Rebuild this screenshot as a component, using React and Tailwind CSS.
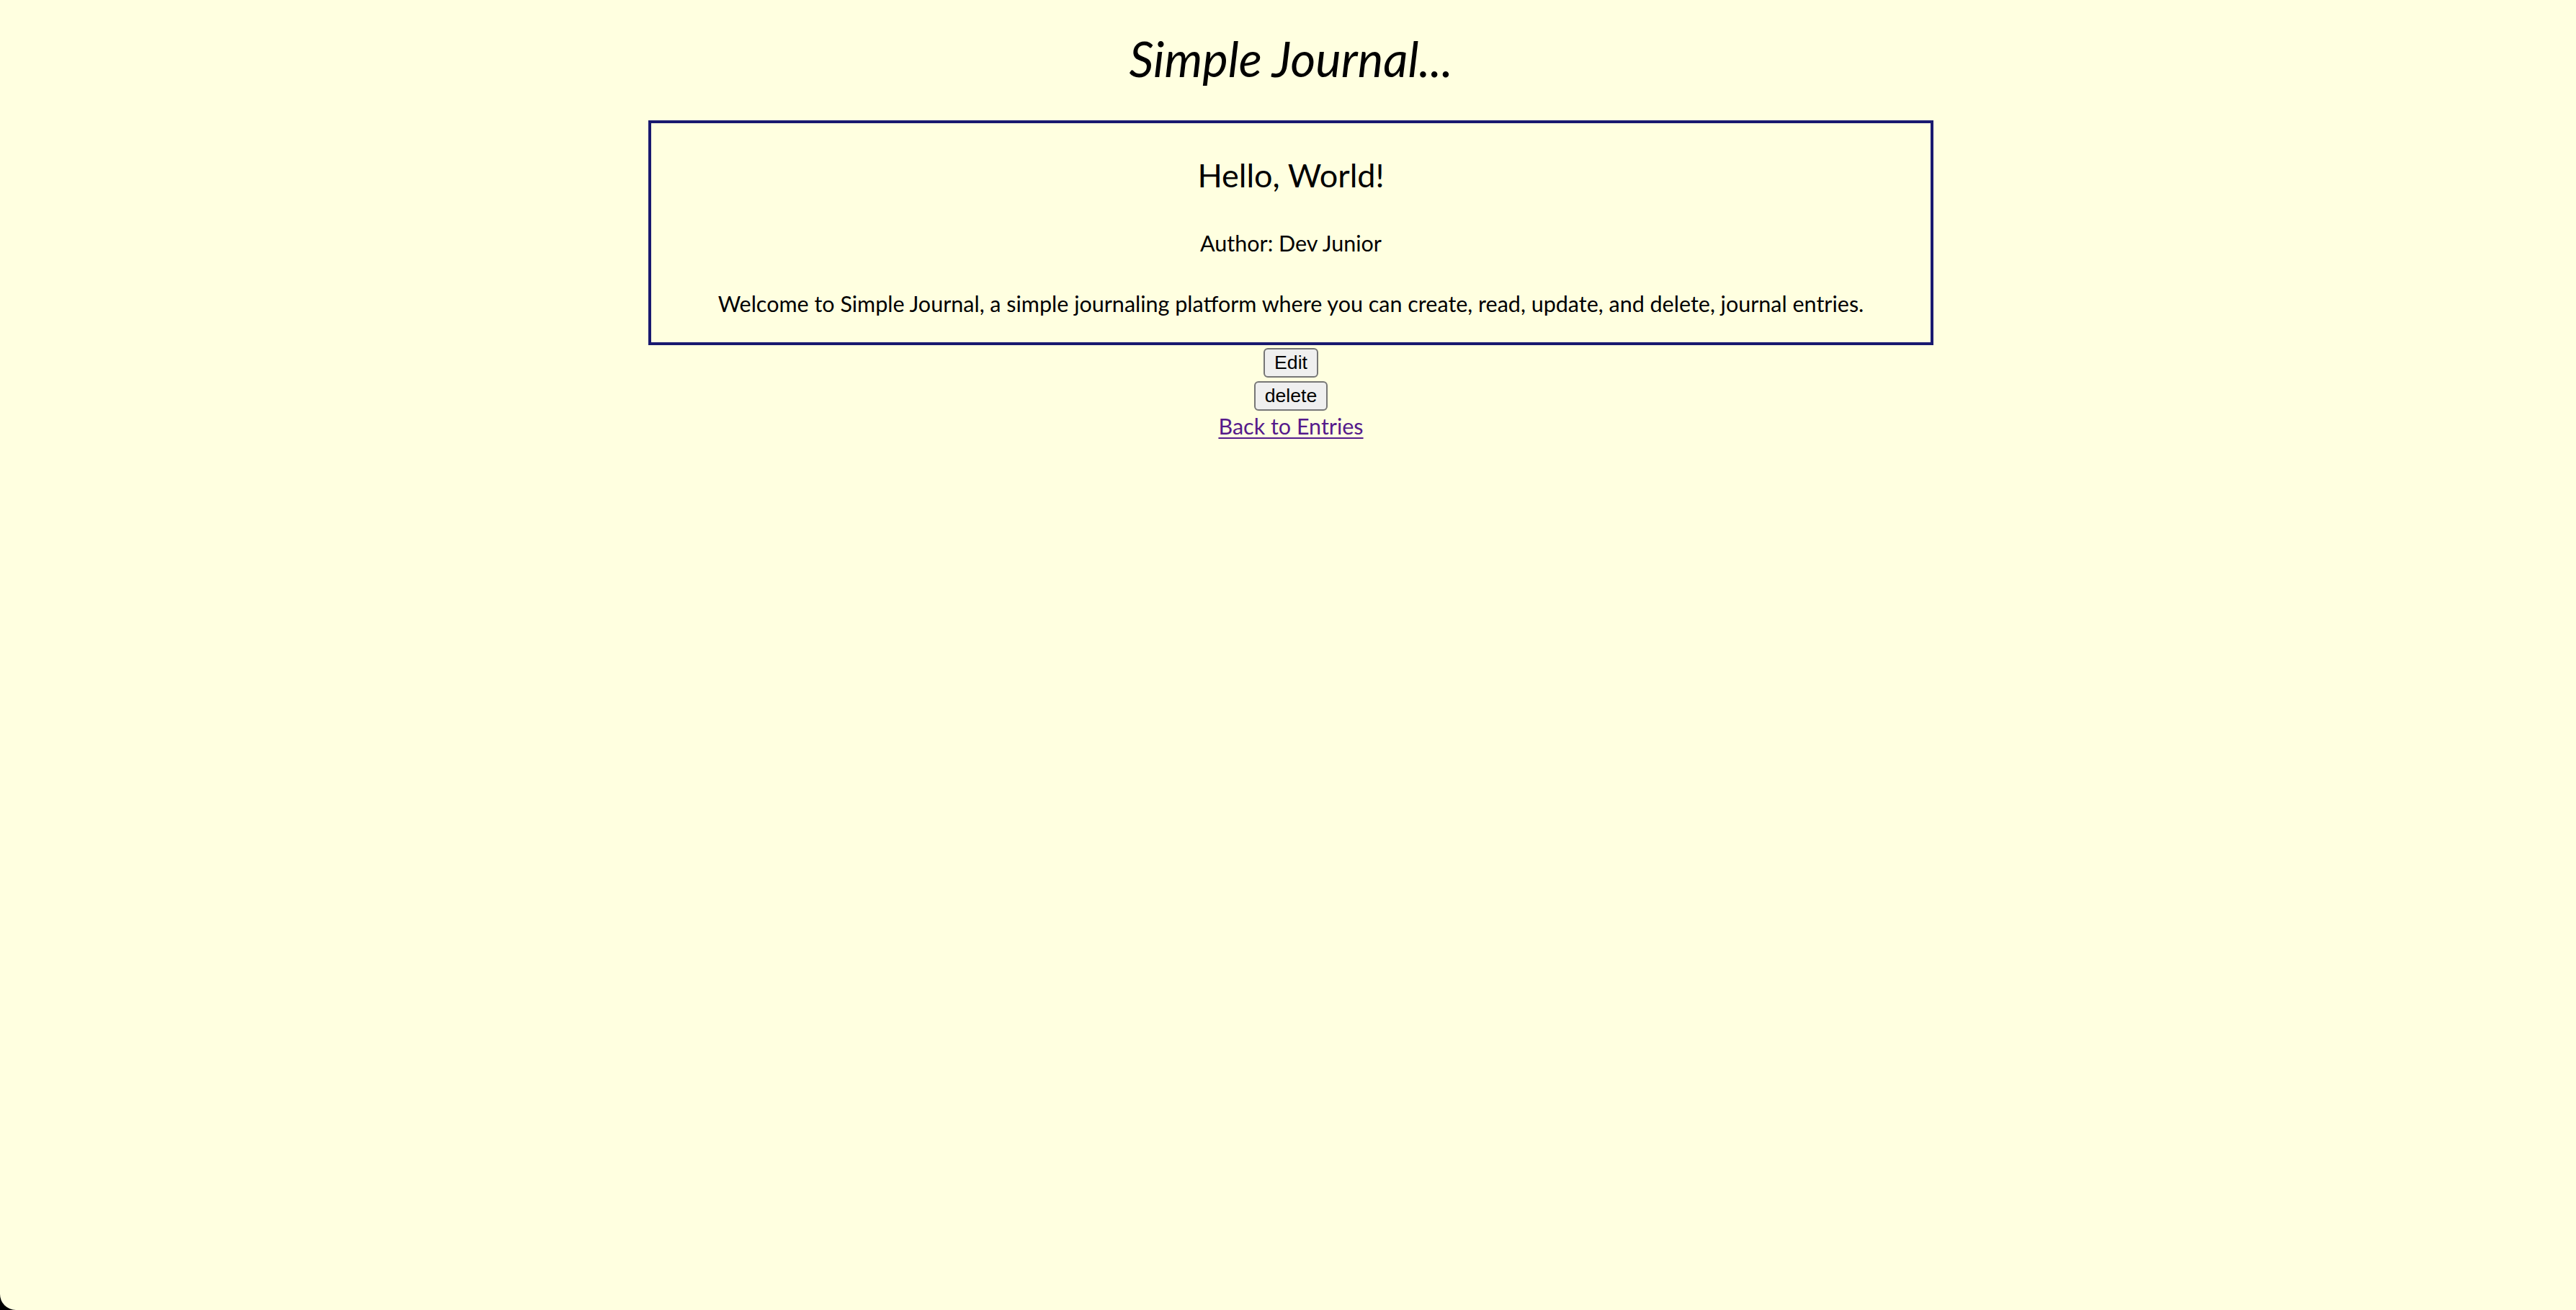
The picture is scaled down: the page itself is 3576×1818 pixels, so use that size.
export default function App() {
  return (
    <div className="bg-black">
      <div className="min-h-screen rounded-bl-[22px] bg-[#ffffe0] pl-[8px] text-black text-center font-['Lato',sans-serif]">
        <h1 className="pt-[41px] text-[67px] leading-[80px] italic font-normal">Simple Journal...</h1>

        <div className="mt-[46px] mx-auto w-[1784px] border-4 border-[#191970] pt-[45px] pb-[35px]">
          <h2 className="text-[45px] leading-[54px] font-normal">Hello, World!</h2>
          <p className="mt-[49px] text-[30.5px] leading-[37px]">Author: Dev Junior</p>
          <p className="mt-[47px] text-[30.5px] leading-[37px]">
            Welcome to Simple Journal, a simple journaling platform where you can create, read, update, and delete, journal entries.
          </p>
        </div>

        <div className="mt-[4px] flex flex-col items-center gap-[5px] font-['Liberation_Sans',Arial,sans-serif]">
          <button className="h-[41px] px-[13px] bg-[#efefef] border-2 border-[#767676] rounded-[6px] text-[26.67px] leading-none">
            Edit
          </button>
          <button className="h-[41px] px-[13px] bg-[#efefef] border-2 border-[#767676] rounded-[6px] text-[26.67px] leading-none">
            delete
          </button>
        </div>

        <a
          href="#"
          className="mt-[3px] inline-block text-[30.5px] leading-[37px] text-[#551a8b] underline decoration-2 underline-offset-[4px]"
        >
          Back to Entries
        </a>
      </div>
    </div>
  );
}
